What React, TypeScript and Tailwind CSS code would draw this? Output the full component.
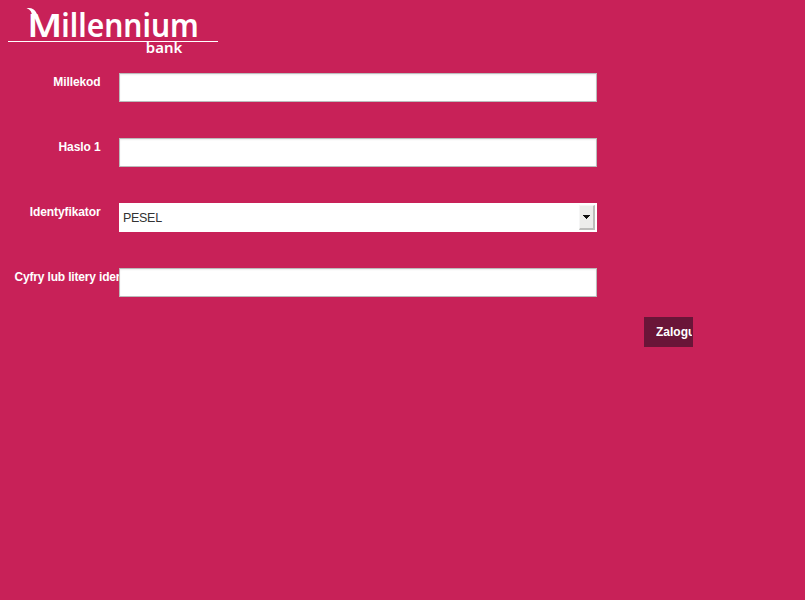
import React from 'react';

function Logo() {
  return (
    <svg className="block overflow-visible" width="210" height="48" viewBox="8 8 210 48" role="img" aria-label="Millennium bank">
      <g fill="#fff" fontFamily="'Noto Sans', 'Open Sans', sans-serif">
        <text x="27.3" y="37.3" fontSize="33" fontWeight="600" textLength="35" lengthAdjust="spacingAndGlyphs">M</text>
        <text x="61.3" y="37.3" fontSize="31.5" fontWeight="600" textLength="137.5" lengthAdjust="spacingAndGlyphs">illennium</text>
        <text x="145.8" y="53.2" fontSize="14" fontWeight="600" textLength="36.5" lengthAdjust="spacingAndGlyphs">bank</text>
      </g>
      <path d="M26.5 8.3C31 7.4 34.5 9.2 36.5 13L38 17L32 18C32.5 13 30.5 9.2 26.5 8.3Z" fill="#fff" />
      <rect x="8" y="41" width="210" height="1" fill="#fff" />
    </svg>
  );
}

function Row({ label, children, long = false }: { label: string; children: React.ReactNode; long?: boolean }) {
  return (
    <div className="flex h-[29px]">
      <div className={`w-[119px] shrink-0 overflow-hidden whitespace-nowrap pt-px text-xs leading-4 font-bold text-white ${long ? 'pl-[14.5px] tracking-[-0.17px]' : 'pr-[18.5px] text-right tracking-[-0.1px]'}`}>
        {label}
      </div>
      {children}
    </div>
  );
}

function Field({ label }: { label: string }) {
  return (
    <input
      aria-label={label}
      className="h-[29px] w-[478px] border border-[#bbb] bg-white px-1 text-[13px] shadow-[inset_0_1px_2px_#eeeeee] outline-none"
    />
  );
}

export default function App() {
  return (
    <main className="h-[600px] w-[805px] overflow-hidden bg-[#c82158] pt-2 font-['Liberation_Sans',Arial,sans-serif]">
      <header className="h-[65px] pl-2">
        <Logo />
      </header>
      <form className="flex flex-col gap-9">
        <Row label="Millekod"><Field label="Millekod" /></Row>
        <Row label="Haslo 1"><Field label="Haslo 1" /></Row>
        <Row label="Identyfikator">
          <div className="flex h-[29px] w-[478px] items-center justify-between bg-white pr-[2px] pl-1 text-[12.5px] tracking-[-0.3px] text-[#333]">
            <span className="pt-px">PESEL</span>
            <span className="flex h-[25px] w-4 items-center justify-center border-t border-r-2 border-b-2 border-l border-t-[#f6f6f6] border-r-[#bdbdbb] border-b-[#bdbdbb] border-l-[#f6f6f6] bg-[#ededeb]">
              <svg width="7" height="4" viewBox="0 0 7 4" shapeRendering="crispEdges">
                <path d="M0 0h7v1H0zM1 1h5v1H1zM2 2h3v1H2zM3 3h1v1H3z" fill="#111" />
              </svg>
            </span>
          </div>
        </Row>
        <Row label="Cyfry lub litery identyfikatora" long><Field label="Cyfry lub litery identyfikatora" /></Row>
      </form>
      <div className="mt-5 ml-[644px] h-[30px] w-[49px] bg-[#6a1538] pr-px pl-3">
        <button className="block h-[30px] w-9 overflow-hidden text-left text-xs leading-[30px] font-bold whitespace-nowrap text-white">Zaloguj</button>
      </div>
    </main>
  );
}
